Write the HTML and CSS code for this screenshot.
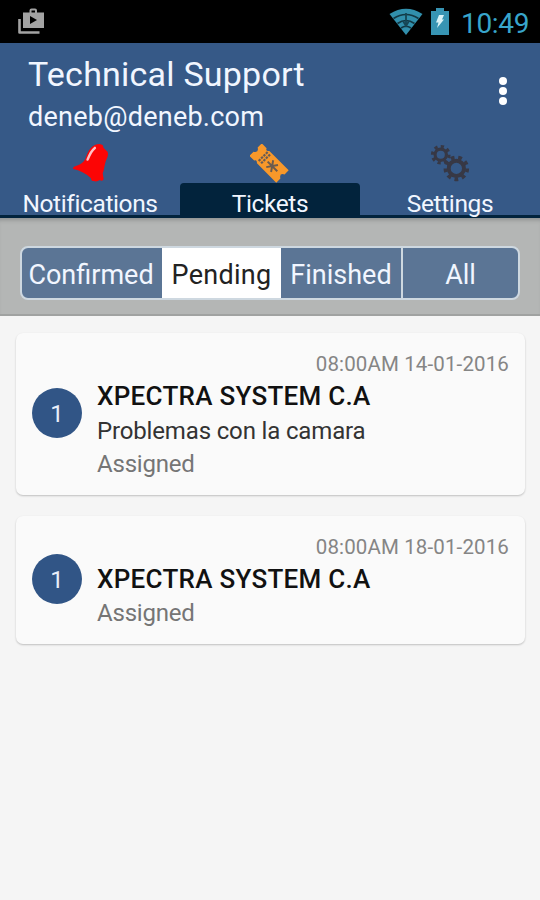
FILE: index.html
```html
<!DOCTYPE html>
<html lang="en">
<head>
<meta charset="utf-8">
<title>Technical Support</title>
<link rel="stylesheet" href="styles.css">
</head>
<body>
<div class="status">
  <svg class="store" width="28" height="28" viewBox="0 0 28 28">
    <path d="M1.500 12v13.500h20" fill="none" stroke="#a3a3a3" stroke-width="2.600" stroke-linejoin="round"/>
    <path d="M12.500 6V3.500q0-1 1-1h3.500q1 0 1 1V6" fill="none" stroke="#a3a3a3" stroke-width="2"/>
    <path fill="#a3a3a3" fill-rule="evenodd" d="M5 5.500h21v15.500H5zM12 9v8l7-4z"/>
  </svg>
  <div class="status-right">
    <svg class="wifi" width="34" height="28" viewBox="0 0 34 28">
      <path d="M.5 6Q17-4.500 33.500 6L17 27z" fill="#318fac"/>
      <path d="M4.500 10.500Q17 2.500 29.500 10.500M8.500 15.500Q17 9.500 25.500 15.500M12 20q5-3.500 10 0" fill="none" stroke="#123844" stroke-width="1.700"/>
      <path d="M17 5v12m-3-4 3 5 3-5" fill="none" stroke="#164655" stroke-width="1.800"/>
    </svg>
    <svg class="battery" width="18" height="27" viewBox="0 0 18 27">
      <path d="M5 0h8v3h5v24H0V3h5z" fill="#3794b3"/>
      <path d="M8 7h5l-2 4.500h2L6 20l1.500-5.500H5z" fill="#d9f2f7"/>
    </svg>
    <span class="clock">10:49</span>
  </div>
</div>
<header class="header">
  <div class="heading">
    <div><h1 class="title">Technical Support</h1><p class="email">deneb@deneb.com</p></div>
    <div class="more"><i></i><i></i><i></i></div>
  </div>
  <nav class="tabs">
    <div class="tab">
      <svg class="tab-icon" width="40" height="40" viewBox="0 0 40 40">
        <path d="M25 1q2-1 5-1l3 1 1 3 4 4q1 2 0 5-2 4-3 9-1 6-2 8l1 6q-1 3-4 1-3 2-6 1-3 0-3-3Q13 28 4 26q-3-1 0-3 8-2 11-7Q19 3 25 1z" fill="#fc0505"/>
        <path d="M25 4q-4 3-7.500 12" fill="none" stroke="#ffc1c5" stroke-width="2.500" stroke-linecap="round"/>
      </svg>
      <span class="tab-label">Notifications</span>
    </div>
    <div class="tab selected">
      <svg class="tab-icon" width="40" height="40" viewBox="0 0 40 40">
        <g transform="translate(19 19.500) rotate(45)">
          <path d="M-19.500-9h7q1 3 4 0h28v6q-5 3 0 6v6h-28q-3-3-4 0h-7v-6q5-3 0-6z" fill="#f8982a"/>
          <path d="M-9-7v14M-5.500-7v14" stroke="#675c57" stroke-width="2.200" stroke-dasharray="2.500 1"/>
          <path d="M-2 0H12M1-5 8 5M8-5 1 5" stroke="#6b5b4e" stroke-width="2"/>
        </g>
      </svg>
      <span class="tab-label">Tickets</span>
    </div>
    <div class="tab">
      <svg class="tab-icon" width="40" height="40" viewBox="0 0 40 40">
        <g fill="none" stroke="#373845">
          <circle cx="10.500" cy="11" r="5.800" stroke-width="3.200"/>
          <circle cx="10.500" cy="11" r="8.500" stroke-width="3.200" pathLength="16" stroke-dasharray="1 1"/>
          <circle cx="26.500" cy="25" r="7.800" stroke-width="4"/>
          <circle cx="26.500" cy="25" r="11.200" stroke-width="3.800" pathLength="18" stroke-dasharray="1 1"/>
        </g>
      </svg>
      <span class="tab-label">Settings</span>
    </div>
  </nav>
</header>
<div class="filters">
  <div class="segments">
    <span class="segment">Confirmed</span><span class="segment active">Pending</span><span class="segment">Finished</span><span class="segment last">All</span>
  </div>
</div>
<main class="list">
  <article class="card">
    <span class="count">1</span>
    <div class="details">
      <div class="date">08:00AM 14-01-2016</div>
      <h2 class="company">XPECTRA SYSTEM C.A</h2>
      <p class="subject">Problemas con la camara</p>
      <p class="state">Assigned</p>
    </div>
  </article>
  <article class="card">
    <span class="count">1</span>
    <div class="details">
      <div class="date">08:00AM 18-01-2016</div>
      <h2 class="company">XPECTRA SYSTEM C.A</h2>
      <p class="state">Assigned</p>
    </div>
  </article>
</main>
</body>
</html>
```
FILE: styles.css
```css
* { box-sizing: border-box; }
body { margin: 0; min-height: 900px; background: #f5f5f5; font-family: Roboto, "Liberation Sans", sans-serif; color: #222; }
h1, h2, p { margin: 0; font-weight: 400; }
svg { display: block; flex: none; }
.status { height: 43px; background: #000; display: flex; justify-content: space-between; padding: 7px 12px 0 18px; }
.status-right { display: flex; }
.wifi { margin-right: 8px; margin-top: 1px; }
.battery { margin-top: 1px; margin-right: 12px; }
.clock { width: 67px; font-size: 28px; line-height: 33px; letter-spacing: -.3px; color: #38a5cb; white-space: nowrap; }
.header { height: 175px; background: #365987; color: #f1f6ff; border-bottom: 3px solid #02233c; }
.heading { height: 96px; display: flex; justify-content: space-between; padding: 10px 33px 0 28px; }
.title { font-size: 34px; line-height: 42px; letter-spacing: .22px; white-space: nowrap; }
.email { margin-top: 5px; font-size: 27px; line-height: 34px; letter-spacing: .25px; white-space: nowrap; }
.more { display: flex; flex-direction: column; gap: 2px; padding-top: 24px; }
.more i { width: 8px; height: 8px; border-radius: 50%; background: #fff; }
.tabs { display: grid; grid-template-columns: repeat(3, 180px); padding-top: 5px; }
.tab { display: flex; flex-direction: column; align-items: center; }
.tab-icon { height: 39px; }
.tab-label { width: 180px; height: 32px; padding-top: 4px; font-size: 24.5px; line-height: 33px; letter-spacing: -.38px; text-align: center; white-space: nowrap; }
.selected .tab-label { background: #02233c; border-radius: 4px 4px 0 0; }
.filters { height: 98px; background: #b4b6b5; border-bottom: 2px solid #a0a2a1; padding: 28px 20px 0; box-shadow: inset 0 5px 4px -3px #8d8f90; }
.segments { display: grid; grid-template-columns: 140px 119px 120px 1fr; height: 54px; border: 2px solid #ced8e0; border-radius: 8px; overflow: hidden; background: #5b7595; }
.segment { color: #f1f6ff; font-size: 27px; line-height: 55px; margin-left: -1px; text-align: center; white-space: nowrap; }
.segment:first-child { margin-left: -2px; }
.active { margin-left: 0; background: #fff; color: #222; letter-spacing: .3px; }
.last { margin-left: 0; border-left: 2px solid #ced8e0; }
.segment:nth-child(3) { margin-left: 0; }
.list { padding: 17px 15px 0 16px; display: flex; flex-direction: column; gap: 21px; }
.card { display: flex; align-items: center; padding: 15px 16px; border-radius: 7px; background: #fafafa; box-shadow: 0 1px 2px rgba(0,0,0,.22); }
.count { width: 50px; height: 50px; margin-top: -2px; border-radius: 50%; background: #315586; color: #e8eefa; font-size: 24px; line-height: 52px; text-align: center; }
.details { flex: 1; margin-left: 15px; }
.date { font-size: 20.5px; line-height: 32px; margin-bottom: -1px; letter-spacing: .13px; color: #858585; text-align: right; }
.company { font-size: 26px; line-height: 34px; letter-spacing: .28px; font-weight: 500; color: #111; white-space: nowrap; }
.subject { font-size: 24px; line-height: 36px; margin-bottom: -2px; letter-spacing: -.15px; color: #333; }
.state { font-size: 24px; line-height: 35px; margin-bottom: -2px; letter-spacing: -.2px; color: #757575; }
```
